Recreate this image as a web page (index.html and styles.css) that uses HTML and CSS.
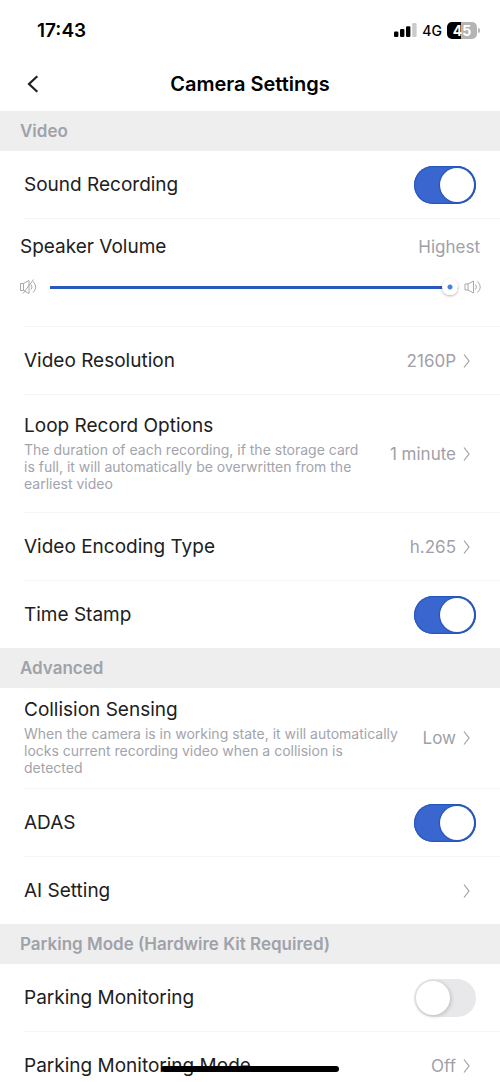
FILE: index.html
```html
<!DOCTYPE html>
<html lang="en">
<head>
<meta charset="utf-8">
<meta name="viewport" content="width=device-width, initial-scale=1">
<title>Camera Settings</title>
<link rel="stylesheet" href="styles.css">
</head>
<body>
<svg class="defs" aria-hidden="true">
  <symbol id="chevron" viewBox="0 0 7 16"><path d="M1 1.5L6 8L1 14.5" fill="none" stroke="currentColor" stroke-width="1.2"/></symbol>
</svg>
<div class="app">
  <div class="status">
    <time class="clock">17:43</time>
    <div class="indicators">
      <svg class="signal" viewBox="0 0 23 14" aria-hidden="true">
        <rect x="0" y="8.5" width="4.4" height="5.5" rx="1.2"/>
        <rect x="6" y="6" width="4.4" height="8" rx="1.2"/>
        <rect x="12" y="3.2" width="4.4" height="10.8" rx="1.2"/>
        <rect x="18.2" y="0" width="4.4" height="14" rx="1.2" fill="#cbcbcb"/>
      </svg>
      <span class="network">4G</span>
      <span class="battery"><span class="battery-level">45</span><span class="battery-tip"></span></span>
    </div>
  </div>
  <header class="titlebar">
    <button class="back" type="button" aria-label="Back">
      <svg viewBox="0 0 12 18" aria-hidden="true"><path d="M10.3 1.2L2 9l8.3 7.8" fill="none" stroke="currentColor" stroke-width="2.2"/></svg>
    </button>
    <h1 class="title">Camera Settings</h1>
  </header>
  <main class="settings">
    <section>
      <h2 class="section-title">Video</h2>
      <div class="group">
        <div class="row">
          <label class="name" for="sound">Sound Recording</label>
          <input class="switch" id="sound" type="checkbox" role="switch" checked>
        </div>
        <div class="volume">
          <div class="volume-head">
            <label class="name" for="volume">Speaker Volume</label>
            <output class="value" for="volume">Highest</output>
          </div>
          <div class="volume-control">
            <svg class="speaker" viewBox="0 0 18 16" aria-hidden="true">
              <path d="M.5 4.500h3v7h-3zM3.500 4.500L9 1.500v13L3.500 11.500M11 5.500q2 2.500 0 5M13 2.500q5.500 5.500 0 11M3 14.500L13.500 .5"/>
            </svg>
            <input class="slider" id="volume" type="range" min="0" max="3" value="3">
            <svg class="speaker" viewBox="0 0 18 16" aria-hidden="true">
              <path d="M1 5h3v6H1zM4 5L9.500 2v12L4 11M11.500 5.500q2 2.500 0 5M13.500 2.500q5.500 5.500 0 11"/>
            </svg>
          </div>
        </div>
        <button class="row" type="button">
          <span class="name">Video Resolution</span>
          <span class="value">2160P<svg class="chevron"><use href="#chevron"/></svg></span>
        </button>
        <button class="row row-tall" type="button">
          <span class="text">
            <span class="name">Loop Record Options</span>
            <span class="description">The duration of each recording, if the storage card is full, it will automatically be overwritten from the earliest video</span>
          </span>
          <span class="value">1 minute<svg class="chevron"><use href="#chevron"/></svg></span>
        </button>
        <button class="row" type="button">
          <span class="name">Video Encoding Type</span>
          <span class="value">h.265<svg class="chevron"><use href="#chevron"/></svg></span>
        </button>
        <div class="row">
          <label class="name" for="stamp">Time Stamp</label>
          <input class="switch" id="stamp" type="checkbox" role="switch" checked>
        </div>
      </div>
    </section>
    <section>
      <h2 class="section-title">Advanced</h2>
      <div class="group">
        <button class="row" type="button">
          <span class="text">
            <span class="name">Collision Sensing</span>
            <span class="description">When the camera is in working state, it will automatically locks current recording video when a collision is detected</span>
          </span>
          <span class="value">Low<svg class="chevron"><use href="#chevron"/></svg></span>
        </button>
        <div class="row">
          <label class="name" for="adas">ADAS</label>
          <input class="switch" id="adas" type="checkbox" role="switch" checked>
        </div>
        <button class="row" type="button">
          <span class="name">AI Setting</span>
          <span class="value"><svg class="chevron"><use href="#chevron"/></svg></span>
        </button>
      </div>
    </section>
    <section>
      <h2 class="section-title">Parking Mode (Hardwire Kit Required)</h2>
      <div class="group">
        <div class="row">
          <label class="name" for="parking">Parking Monitoring</label>
          <input class="switch" id="parking" type="checkbox" role="switch">
        </div>
        <button class="row" type="button">
          <span class="name">Parking Monitoring Mode</span>
          <span class="value">Off<svg class="chevron"><use href="#chevron"/></svg></span>
        </button>
      </div>
    </section>
  </main>
  <div class="home-indicator"></div>
</div>
</body>
</html>
```
FILE: styles.css
```css
* {
  box-sizing: border-box;
}

body {
  margin: 0;
  background: #fff;
  color: #202022;
  font-family: Inter, "Liberation Sans", sans-serif;
}

button {
  border: 0;
  background: none;
  color: inherit;
  font: inherit;
  text-align: left;
}

.defs {
  display: none;
}

.app {
  position: relative;
  display: flex;
  flex-direction: column;
  height: 100vh;
  overflow: hidden;
}

.status {
  display: flex;
  align-items: center;
  justify-content: space-between;
  height: 60px;
  padding: 0 23px 0 37px;
  color: #000;
}

.clock {
  font-size: 19px;
  font-weight: 600;
}

.indicators {
  display: flex;
  align-items: center;
  gap: 5px;
}

.signal {
  width: 23px;
  height: 14px;
}

.network {
  font-size: 14px;
  font-weight: 500;
}

.battery {
  position: relative;
  width: 30px;
  border-radius: 5px;
  background: linear-gradient(90deg, #000 45%, #b4b4b4 45%);
  color: #fff;
  font-size: 14px;
  font-weight: 700;
  line-height: 17px;
  text-align: center;
}

.battery-tip {
  position: absolute;
  top: 6px;
  right: -3px;
  width: 2px;
  height: 5px;
  border-radius: 0 2px 2px 0;
  background: #b4b4b4;
}

.titlebar {
  display: grid;
  grid-template-columns: 44px 1fr 44px;
  align-items: center;
  height: 51px;
  padding: 0 11px 3px;
}

.back {
  display: flex;
  justify-content: center;
  padding: 12px 0;
}

.back svg {
  width: 12px;
  height: 18px;
}

.title {
  margin: 0;
  color: #000;
  font-size: 20px;
  font-weight: 600;
  line-height: 24px;
  text-align: center;
}

.settings {
  flex: 1;
  min-height: 0;
  overflow-y: auto;
  scrollbar-width: none;
}

.section-title {
  margin: 0;
  padding: 0 20px;
  background: #eee;
  color: #a0a2aa;
  font-size: 17px;
  font-weight: 600;
  line-height: 40px;
}

.group > * {
  border-bottom: 1px solid #f4f4f5;
  margin-left: 24px;
}

.group > :last-child {
  border-bottom: 0;
}

.row {
  box-sizing: content-box;
  display: flex;
  align-items: center;
  justify-content: space-between;
  gap: 20px;
  width: calc(100% - 54px);
  min-height: 67px;
  padding: 0 30px 0 0;
}

div.row {
  width: calc(100% - 48px);
  padding-right: 24px;
}

.row-tall {
  min-height: 117px;
}

.name {
  font-size: 19px;
  line-height: 26px;
}

.text {
  display: flex;
  flex: 1;
  flex-direction: column;
  gap: 2px;
  padding: 9px 0 12px;
}

.description {
  color: #a3a4ab;
  font-size: 14px;
  line-height: 17px;
}

.value {
  display: flex;
  align-items: center;
  gap: 7px;
  color: #a0a1a8;
  font-size: 17px;
  white-space: nowrap;
}

.chevron {
  width: 7px;
  height: 16px;
}

.switch {
  appearance: none;
  display: flex;
  align-items: center;
  flex: none;
  width: 62px;
  height: 38px;
  margin: 0;
  padding: 0 2px;
  border-radius: 19px;
  background: #e8e8eb;
}

.switch::before {
  content: "";
  width: 34px;
  height: 34px;
  border-radius: 50%;
  background: #fff;
  box-shadow: 1px 1px 4px rgba(0, 0, 0, 0.2);
}

.switch:checked {
  justify-content: flex-end;
  background: #3967cf;
  box-shadow: inset 0 0 1px 1px #2456b4;
}

.switch:checked::before {
  box-shadow: 0 0 1px 1px #2456b4;
}

.volume {
  padding: 15px 18px 29px 0;
}

.volume-head,
.volume-control {
  display: flex;
  align-items: center;
  justify-content: space-between;
  margin-left: -4px;
}

.volume-head {
  padding-right: 2px;
}

.volume-control {
  gap: 6px;
  height: 20px;
  margin-top: 17px;
}

.speaker {
  flex: none;
  width: 18px;
  height: 16px;
  fill: none;
  stroke: #a9a9a9;
  stroke-width: 1;
}

.slider {
  appearance: none;
  flex: 1;
  min-width: 0;
  height: 16px;
  margin: 0 0 0 6px;
  background: linear-gradient(#2858bd, #2858bd) center / 100% 3px no-repeat;
}

.slider::-webkit-slider-thumb {
  appearance: none;
  width: 16px;
  height: 16px;
  border-radius: 50%;
  background: radial-gradient(circle, #4380e8 2px, #fff 3px);
  box-shadow: 0 1px 3px rgba(0, 0, 0, 0.3);
}

.home-indicator {
  position: absolute;
  bottom: 10px;
  left: 50%;
  width: 178px;
  height: 6px;
  margin-left: -89px;
  border-radius: 3px;
  background: #000;
}
```
